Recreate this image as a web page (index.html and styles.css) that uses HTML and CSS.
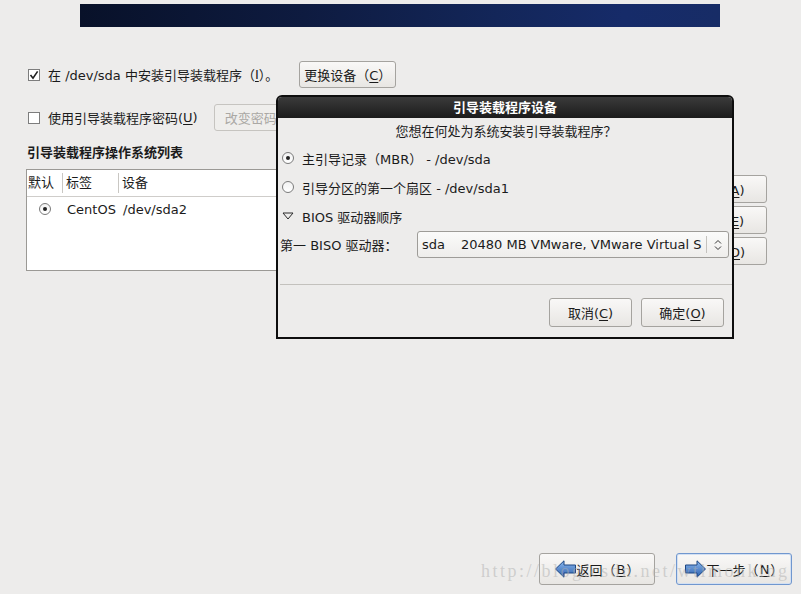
FILE: index.html
```html
<!DOCTYPE html>
<html lang="zh-CN">
<head>
    <meta charset="UTF-8">
    <title>引导装载程序</title>
    <link rel="stylesheet" href="styles.css">
</head>
<body>

    <div class="installer">
        <!-- Header banner -->
        <div class="banner"></div>

        <div class="main">
            <div class="option-row row-boot">
                <label class="check">
                    <span class="checkbox">
                        <svg width="10" height="10" viewBox="0 0 10 10"><path d="M1.5 5 L4 8.2 L8.6 1.4" stroke="#1e1e1e" stroke-width="1.6" fill="none"/></svg>
                    </span>
                    在 /dev/sda 中安装引导装载程序（<u>I</u>）。
                </label>
                <button class="btn btn-device">更换设备（<u>C</u>）</button>
            </div>

            <div class="option-row row-pass">
                <label class="check">
                    <span class="checkbox"></span>
                    使用引导装载程序密码(<u>U</u>)
                </label>
                <button class="btn btn-pass" disabled>改变密码(<u>P</u>)</button>
            </div>

            <h3 class="section-title">引导装载程序操作系统列表</h3>

            <div class="os-area">
                <div class="os-list">
                    <div class="os-head">
                        <span class="col col-default">默认</span>
                        <span class="col col-label">标签</span>
                        <span class="col col-device">设备</span>
                    </div>
                    <div class="os-row">
                        <span class="cell-default"><span class="radio on"></span></span>
                        <span class="cell-label">CentOS</span>
                        <span class="cell-device">/dev/sda2</span>
                    </div>
                </div>
                <div class="side-buttons">
                    <button class="btn">添加(<u>A</u>)</button>
                    <button class="btn">编辑(<u>E</u>)</button>
                    <button class="btn">删除(<u>D</u>)</button>
                </div>
            </div>
        </div>

        <!-- Navigation buttons -->
        <div class="footer">
            <button class="btn nav-btn">
                <svg width="21" height="18" viewBox="0 0 21 18">
                    <defs>
                        <linearGradient id="arrowBack" x1="0" y1="0" x2="0" y2="1">
                            <stop offset="0" stop-color="#8db9ee"/>
                            <stop offset="1" stop-color="#2a5fae"/>
                        </linearGradient>
                    </defs>
                    <polygon points="0.5,9 9,0.8 9,5 20.5,5 20.5,13 9,13 9,17.2" fill="url(#arrowBack)" stroke="#1c4683"/>
                </svg>
                返回（<u>B</u>）
            </button>
            <button class="btn nav-btn focused">
                <svg width="21" height="18" viewBox="0 0 21 18">
                    <defs>
                        <linearGradient id="arrowNext" x1="0" y1="0" x2="0" y2="1">
                            <stop offset="0" stop-color="#8db9ee"/>
                            <stop offset="1" stop-color="#2a5fae"/>
                        </linearGradient>
                    </defs>
                    <polygon points="20.5,9 12,0.8 12,5 0.5,5 0.5,13 12,13 12,17.2" fill="url(#arrowNext)" stroke="#1c4683"/>
                </svg>
                下一步（<u>N</u>）
            </button>
        </div>
    </div>

    <!-- Boot loader device dialog -->
    <div class="dialog">
        <div class="dialog-title">引导装载程序设备</div>
        <div class="dialog-body">
            <div class="dlg-question">您想在何处为系统安装引导装载程序？</div>
            <div class="dlg-option opt-first"><span class="radio on"></span>主引导记录（MBR） - /dev/sda</div>
            <div class="dlg-option"><span class="radio"></span>引导分区的第一个扇区 - /dev/sda1</div>
            <div class="dlg-option">
                <svg class="expander" width="12" height="8" viewBox="0 0 12 8"><polygon points="1,1 11,1 6,7" fill="none" stroke="#2a2a2a"/></svg>
                BIOS 驱动器顺序
            </div>
            <div class="combo-row">
                <span class="combo-label">第一 BISO 驱动器：</span>
                <div class="combo">
                    <span class="combo-value"><span class="combo-dev">sda</span>20480 MB VMware, VMware Virtual S</span>
                    <span class="combo-sep"></span>
                    <svg class="combo-arrows" width="8" height="12" viewBox="0 0 8 12"><path d="M1 4.5 L4 1.5 L7 4.5 M1 7.5 L4 10.5 L7 7.5" stroke="#333" fill="none"/></svg>
                </div>
            </div>
            <div class="dlg-sep"></div>
            <div class="dlg-buttons">
                <button class="btn">取消(<u>C</u>)</button>
                <button class="btn">确定(<u>O</u>)</button>
            </div>
        </div>
    </div>

    <div class="watermark">http://blog.csdn.net/wtlmonking</div>

</body>
</html>
```

FILE: styles.css
```css
/* General */
* {
    box-sizing: border-box;
}

body {
    margin: 0;
    background-color: #edeceb;
    font-family: "DejaVu Sans", "Noto Sans CJK SC", sans-serif;
    font-size: 13px;
    color: #1b1b1b;
}

u {
    text-decoration: underline;
    text-underline-offset: 2px;
}

.installer {
    width: 801px;
    height: 594px;
    display: flex;
    flex-direction: column;
}

.banner {
    margin: 4px 0 0 80px;
    width: 640px;
    height: 23px;
    background: linear-gradient(90deg, #081129 0%, #0e1b40 35%, #132659 65%, #162b69 85%, #172c66 100%);
}

/* Buttons */
.btn {
    font: inherit;
    color: #1b1b1b;
    height: 27px;
    padding: 0 6px;
    border: 1px solid #a5a39f;
    border-radius: 3px;
    background: linear-gradient(#f9f8f7, #e8e6e3);
    white-space: nowrap;
}

.btn:disabled {
    color: #aaa8a4;
    border-color: #c6c4c0;
    background: #efeeec;
}

/* Top options */
.main {
    padding-left: 26px;
}

.option-row {
    display: flex;
    align-items: center;
    height: 27px;
}

.row-boot {
    margin-top: 34px;
}

.row-pass {
    margin-top: 16px;
}

.check {
    display: flex;
    align-items: center;
    padding-left: 2px;
}

.checkbox {
    width: 12px;
    height: 12px;
    margin-right: 8px;
    border: 1px solid #7d7d7d;
    background-color: #ffffff;
    display: flex;
    align-items: center;
    justify-content: center;
}

.btn-device {
    width: 97px;
    margin-left: 21px;
    padding: 0;
}

.btn-pass {
    width: 92px;
    margin-left: 16px;
}

.section-title {
    margin: 14px 0 0 1px;
    font-size: 13px;
    line-height: 16px;
    font-weight: bold;
}

/* OS list */
.os-area {
    display: flex;
    gap: 9px;
    margin-top: 8px;
}

.os-list {
    width: 642px;
    height: 102px;
    border: 1px solid #9b9995;
    background-color: #ffffff;
}

.os-head {
    display: flex;
    height: 27px;
    border-bottom: 1px solid #cfcdca;
}

.col {
    position: relative;
    line-height: 26px;
    padding-left: 3px;
}

.col::after {
    content: "";
    position: absolute;
    right: 0;
    top: 3px;
    bottom: 3px;
    width: 1px;
    background-color: #c9c7c3;
}

.col-default {
    width: 36px;
    padding-left: 1px;
}

.col-label {
    width: 56px;
}

.col-device::after {
    display: none;
}

.os-row {
    display: flex;
    align-items: center;
    height: 24px;
}

.cell-default {
    width: 36px;
    display: flex;
    justify-content: center;
}

.cell-label {
    width: 56px;
    padding-left: 4px;
}

.cell-device {
    padding-left: 4px;
}

.side-buttons {
    display: flex;
    flex-direction: column;
    gap: 3px;
    margin-top: 6px;
}

.side-buttons .btn {
    width: 90px;
    height: 28px;
}

/* Radio */
.radio {
    position: relative;
    display: inline-block;
    width: 12px;
    height: 12px;
    border: 1px solid #7b7b7b;
    border-radius: 50%;
    background: linear-gradient(#f2f2f2, #ffffff);
}

.radio.on::after {
    content: "";
    position: absolute;
    left: 3px;
    top: 3px;
    width: 4px;
    height: 4px;
    border-radius: 50%;
    background-color: #222222;
}

/* Footer navigation */
.footer {
    margin-top: auto;
    display: flex;
    justify-content: flex-end;
    gap: 21px;
    padding: 0 9px 9px 0;
}

.nav-btn {
    width: 116px;
    height: 32px;
    display: flex;
    align-items: center;
    justify-content: center;
    gap: 1px;
}

.nav-btn.focused {
    border-color: #7097cf;
    box-shadow: inset 0 0 0 1px #d3e0f2;
}

/* Dialog */
.dialog {
    position: absolute;
    left: 276px;
    top: 95px;
    width: 458px;
    height: 244px;
    border: 2px solid #0e0e0e;
    border-radius: 6px 6px 0 0;
    background-color: #edeceb;
}

.dialog-title {
    height: 21px;
    line-height: 21px;
    text-align: center;
    color: #ffffff;
    font-weight: bold;
    border-radius: 4px 4px 0 0;
    background: linear-gradient(#3b3b3b, #1b1b1b);
}

.dialog-body {
    padding: 0 0 0 2px;
}

.dlg-question {
    margin-top: 5px;
    line-height: 17px;
    text-align: center;
}

.dlg-option {
    display: flex;
    align-items: center;
    height: 20px;
    margin: 9px 0 0 2px;
}

.dlg-option.opt-first {
    margin-top: 8px;
}

.dlg-option .radio,
.dlg-option .expander {
    margin-right: 8px;
}

.combo-row {
    display: flex;
    align-items: center;
    margin-top: 5px;
}

.combo-label {
    width: 137px;
}

.combo {
    width: 312px;
    height: 27px;
    display: flex;
    align-items: center;
    border: 1px solid #9e9c98;
    border-radius: 3px;
    background: linear-gradient(#fbfbfa, #eeedeb);
}

.combo-value {
    flex: 1;
    padding-left: 4px;
    white-space: nowrap;
    overflow: hidden;
}

.combo-dev {
    display: inline-block;
    width: 39px;
}

.combo-sep {
    width: 1px;
    height: 17px;
    background-color: #c4c2be;
}

.combo-arrows {
    margin: 0 6px 0 7px;
}

.dlg-sep {
    margin-top: 26px;
    height: 1px;
    background-color: #c3c1bd;
}

.dlg-buttons {
    display: flex;
    justify-content: flex-end;
    gap: 9px;
    margin-top: 13px;
    padding-right: 8px;
}

.dlg-buttons .btn {
    width: 83px;
    height: 29px;
}

/* Watermark */
.watermark {
    position: absolute;
    left: 481px;
    top: 561px;
    font-family: "Liberation Serif", serif;
    font-size: 18px;
    letter-spacing: 2.5px;
    color: rgba(175, 175, 175, 0.5);
    white-space: nowrap;
}
```
